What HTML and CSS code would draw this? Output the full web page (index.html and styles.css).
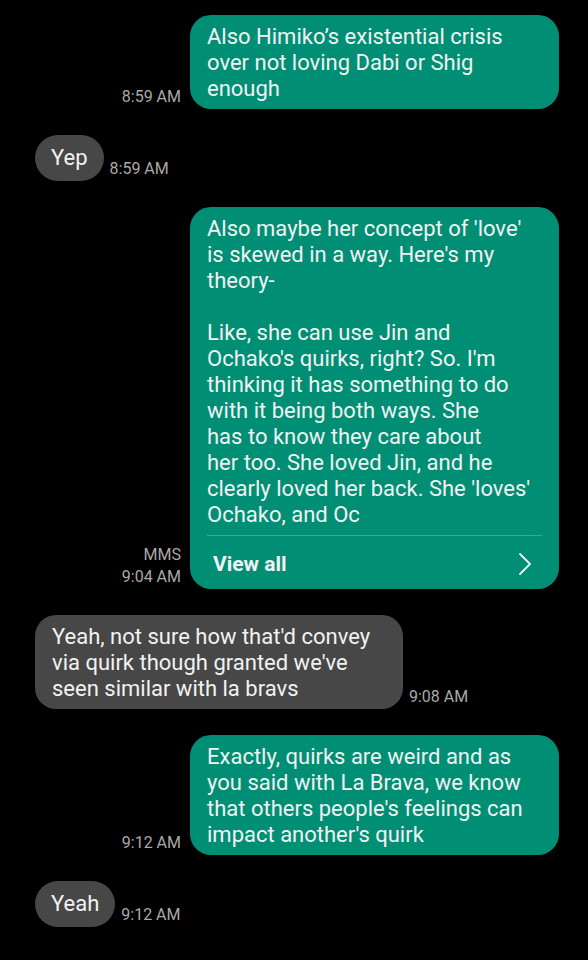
FILE: index.html
```html
<!DOCTYPE html>
<html lang="en">
<head>
  <meta charset="UTF-8">
  <title>Messages</title>
  <meta name="viewport" content="width=device-width, initial-scale=1.0">
  <link rel="stylesheet" href="styles.css">
</head>
<body>
  <div class="thread">

    <!-- sent -->
    <div class="row sent">
      <div class="meta">8:59 AM</div>
      <div class="bubble">Also Himiko’s existential crisis over not loving Dabi or Shig enough</div>
    </div>

    <div class="row received">
      <div class="bubble short">Yep</div>
      <div class="meta">8:59 AM</div>
    </div>

    <!-- long MMS, preview is cut off -->
    <div class="row sent">
      <div class="meta">MMS<br>9:04 AM</div>
      <div class="bubble mms">
        <div class="mms-body">Also maybe her concept of 'love' is skewed in a way. Here's my theory-<br><br>Like, she can use Jin and Ochako's quirks, right? So. I'm thinking it has something to do with it being both ways. She<br>has to know they care about<br>her too. She loved Jin, and he<br>clearly loved her back. She 'loves'<br>Ochako, and Oc</div>
        <div class="view-all">
          <span>View all</span>
          <svg class="chevron" width="14" height="24" viewBox="0 0 14 24">
            <path d="M2 2 L12 12 L2 22" fill="none" stroke="#e9f5f1" stroke-width="1.8" stroke-linecap="round" stroke-linejoin="round"/>
          </svg>
        </div>
      </div>
    </div>

    <div class="row received">
      <div class="bubble">Yeah, not sure how that'd convey via quirk though granted we've seen similar with la bravs</div>
      <div class="meta">9:08 AM</div>
    </div>

    <div class="row sent">
      <div class="meta">9:12 AM</div>
      <div class="bubble">Exactly, quirks are weird and as you said with La Brava, we know that others people's feelings can impact another's quirk</div>
    </div>

    <div class="row received">
      <div class="bubble short">Yeah</div>
      <div class="meta">9:12 AM</div>
    </div>

  </div>
</body>
</html>
```

FILE: styles.css
```css
:root {
  --bg: #000;
  --sent-bg: #008f75;
  --recv-bg: #474747;
  --text: #f2f2f2;
  --meta: #a9a9a9;
}
* {
  box-sizing: border-box;
}
body {
  margin: 0;
  background-color: var(--bg);
  color: var(--text);
  font-family: Roboto, 'Noto Sans', Arial, sans-serif;
}
.thread {
  display: flex;
  flex-direction: column;
  gap: 26px;
  padding: 15px 29px 30px 35px;
}
.row {
  display: flex;
  align-items: flex-end;
  gap: 9px;
}
.row.sent {
  justify-content: flex-end;
}
.row.received {
  justify-content: flex-start;
  gap: 6px;
}
.bubble {
  max-width: 369px;
  padding: 9px 17px 7px;
  border-radius: 21px;
  font-size: 22px;
  line-height: 26px;
}
.sent .bubble {
  width: 369px;
  background-color: var(--sent-bg);
}
.received .bubble {
  background-color: var(--recv-bg);
}
.received .bubble:not(.short) {
  width: 368px;
}
.bubble.short {
  padding: 10px 16px;
  border-radius: 23px;
}
.meta {
  color: var(--meta);
  font-size: 16px;
  line-height: 22px;
  text-align: right;
  padding-bottom: 1px;
  white-space: nowrap;
}
.bubble.mms {
  padding: 9px 17px 0;
}
.mms-body {
  padding-bottom: 7px;
  border-bottom: 1px solid rgba(255, 255, 255, 0.22);
}
.view-all {
  display: flex;
  align-items: center;
  justify-content: space-between;
  padding: 15px 10px 12px 6px;
  font-weight: bold;
  font-size: 21px;
}
.chevron {
  display: block;
}
```
